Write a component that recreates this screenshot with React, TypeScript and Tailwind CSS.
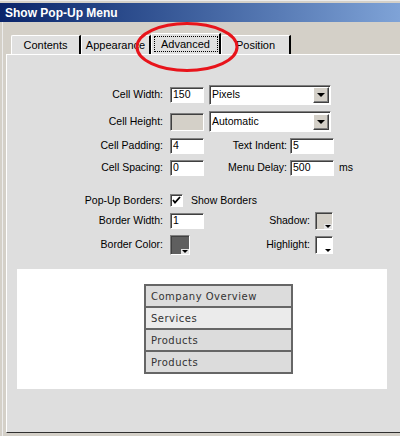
import React from 'react';

const sunken =
  'border border-t-[#808080] border-l-[#808080] border-b-white border-r-white shadow-[inset_1px_1px_0_#404040]';
const raised =
  'border border-t-white border-l-white border-b-[#404040] border-r-[#404040] shadow-[inset_-1px_-1px_0_#808080]';

function TextBox({ value, className, disabled }: { value?: string; className: string; disabled?: boolean }) {
  return (
    <div className={`${sunken} ${disabled ? 'bg-[#d4d0c8]' : 'bg-white'} ${className} flex items-center pl-[2px]`}>
      {value}
    </div>
  );
}

function Arrow() {
  return (
    <div className="h-0 w-0 border-l-[4px] border-r-[4px] border-t-[4px] border-l-transparent border-r-transparent border-t-black" />
  );
}

function Select({ value, h }: { value: string; h: string }) {
  return (
    <div className={`${sunken} bg-white ml-[5px] w-[122px] ${h} flex items-center justify-between pl-[2px] pr-px`}>
      <span>{value}</span>
      <div className={`${raised} bg-[#d4d0c8] w-[16px] h-[16px] flex items-center justify-center`}>
        <Arrow />
      </div>
    </div>
  );
}

function Swatch({ fill, size, notch }: { fill: string; size: string; notch?: boolean }) {
  return (
    <div className={`${sunken} ${fill} ${size} relative`}>
      <div
        className={`absolute right-0 bottom-0 w-[8px] h-[5px] flex items-center justify-center ${
          notch ? 'bg-[#e4e4e4]' : ''
        }`}
      >
        <div className="h-0 w-0 border-l-[3px] border-r-[3px] border-t-[3px] border-l-transparent border-r-transparent border-t-black" />
      </div>
    </div>
  );
}

const tabs = ['Contents', 'Appearance', 'Advanced', 'Position'];
const menuItems = [
  { label: 'Company Overview', bg: 'bg-[#dcdcdc]' },
  { label: 'Services', bg: 'bg-[#ebebeb]' },
  { label: 'Products', bg: 'bg-[#dcdcdc]' },
  { label: 'Products', bg: 'bg-[#dcdcdc]' },
];

export default function App() {
  return (
    <div className="relative w-[400px] h-[436px] overflow-hidden bg-[#d4d0c8] flex flex-col text-[10.5px] text-black font-['Liberation_Sans',Arial,sans-serif]">
      {/* window edge above title */}
      <div className="h-[3px] bg-[#d4d0c8] border-t border-[#ececec]" />
      <div className="h-[19px] bg-gradient-to-r from-[#0a246a] to-[#7fa3d7] flex items-center pl-[5px]">
        <span className="text-white font-bold text-[12px]">Show Pop-Up Menu</span>
      </div>

      <div className="flex flex-1">
        <div className="w-[6px] flex">
          <div className="w-[2px] bg-[#d4d0c8]" />
          <div className="w-[1px] bg-[#ececec]" />
          <div className="w-[3px] bg-[#d4d0c8]" />
        </div>

        <div className="flex flex-col flex-1">
          {/* tab strip */}
          <div className="h-[32px] flex items-end pl-[5px]">
            {tabs.map((t) => {
              const active = t === 'Advanced';
              return (
                <div
                  key={t}
                  className={`w-[70px] ${active ? 'h-[21px]' : 'h-[19px]'} bg-[#e0e0e0] border-t border-l border-white border-r-2 border-r-black rounded-tl-[2px] flex items-center justify-center text-[11px]`}
                >
                  {active ? (
                    <span className="border border-dotted border-black leading-[14px] w-[64px] text-center">{t}</span>
                  ) : (
                    <span>{t}</span>
                  )}
                </div>
              );
            })}
          </div>

          {/* tab panel */}
          <div className="h-[379px] bg-[#dedede] border-t border-l border-white border-b border-b-[#303030] flex flex-col">
            <div className="mt-[30px] h-[20px] flex items-center">
              <div className="w-[156px] text-right">Cell Width:</div>
              <TextBox value="150" className="ml-[7px] w-[34px] h-[16px]" />
              <Select value="Pixels" h="h-[20px]" />
            </div>

            <div className="mt-[6px] h-[21px] flex items-center">
              <div className="w-[156px] text-right">Cell Height:</div>
              <TextBox disabled className="ml-[7px] w-[34px] h-[18px]" />
              <Select value="Automatic" h="h-[21px]" />
            </div>

            <div className="mt-[5px] h-[17px] flex items-center">
              <div className="w-[156px] text-right">Cell Padding:</div>
              <TextBox value="4" className="ml-[7px] w-[34px] h-[16px]" />
              <div className="w-[83px] text-right">Text Indent:</div>
              <TextBox value="5" className="ml-[3px] w-[44px] h-[16px]" />
            </div>

            <div className="mt-[5px] h-[17px] flex items-center">
              <div className="w-[156px] text-right">Cell Spacing:</div>
              <TextBox value="0" className="ml-[7px] w-[34px] h-[16px]" />
              <div className="w-[83px] text-right">Menu Delay:</div>
              <TextBox value="500" className="ml-[3px] w-[44px] h-[16px]" />
              <span className="ml-[5px]">ms</span>
            </div>

            <div className="mt-[18px] h-[13px] flex items-center">
              <div className="w-[156px] text-right">Pop-Up Borders:</div>
              <div className={`${sunken} bg-white ml-[7px] w-[13px] h-[13px] flex items-center justify-center`}>
                <svg width="9" height="9" viewBox="0 0 9 9">
                  <path d="M1 4 L3 6.5 L8 1" stroke="black" strokeWidth="1.8" fill="none" />
                </svg>
              </div>
              <span className="ml-[8px]">Show Borders</span>
            </div>

            <div className="mt-[5px] h-[18px] flex items-center">
              <div className="w-[156px] text-right">Border Width:</div>
              <TextBox value="1" className="ml-[7px] w-[34px] h-[16px]" />
              <div className="w-[106px] text-right">Shadow:</div>
              <div className="ml-[5px]">
                <Swatch fill="bg-[#d4d0c8]" size="w-[18px] h-[18px]" notch />
              </div>
            </div>

            <div className="mt-[5px] h-[20px] flex items-center">
              <div className="w-[156px] text-right">Border Color:</div>
              <div className="ml-[7px]">
                <Swatch fill="bg-[#5f5f5f]" size="w-[20px] h-[20px]" notch />
              </div>
              <div className="w-[120px] text-right">Highlight:</div>
              <div className="ml-[5px]">
                <Swatch fill="bg-white" size="w-[18px] h-[18px]" />
              </div>
            </div>

            {/* preview */}
            <div className="mt-[14px] ml-[10px] w-[370px] h-[120px] bg-white pt-[15px] pl-[127px]">
              <div className="w-[149px] border-2 border-[#666666] bg-[#666666] flex flex-col gap-[2px]">
                {menuItems.map((m, i) => (
                  <div
                    key={i}
                    className={`${m.bg} h-[20px] flex items-center pl-[5px] text-[10px] tracking-[0.5px] text-[#333333] font-['DejaVu_Sans',Verdana,sans-serif]`}
                  >
                    {m.label}
                  </div>
                ))}
              </div>
            </div>
          </div>
        </div>
      </div>

      {/* annotation */}
      <svg className="absolute left-[134px] top-[21px]" width="106" height="52" viewBox="0 0 106 52">
        <ellipse cx="53" cy="26" rx="50" ry="23.5" fill="none" stroke="#e8141b" strokeWidth="3" />
      </svg>
    </div>
  );
}
